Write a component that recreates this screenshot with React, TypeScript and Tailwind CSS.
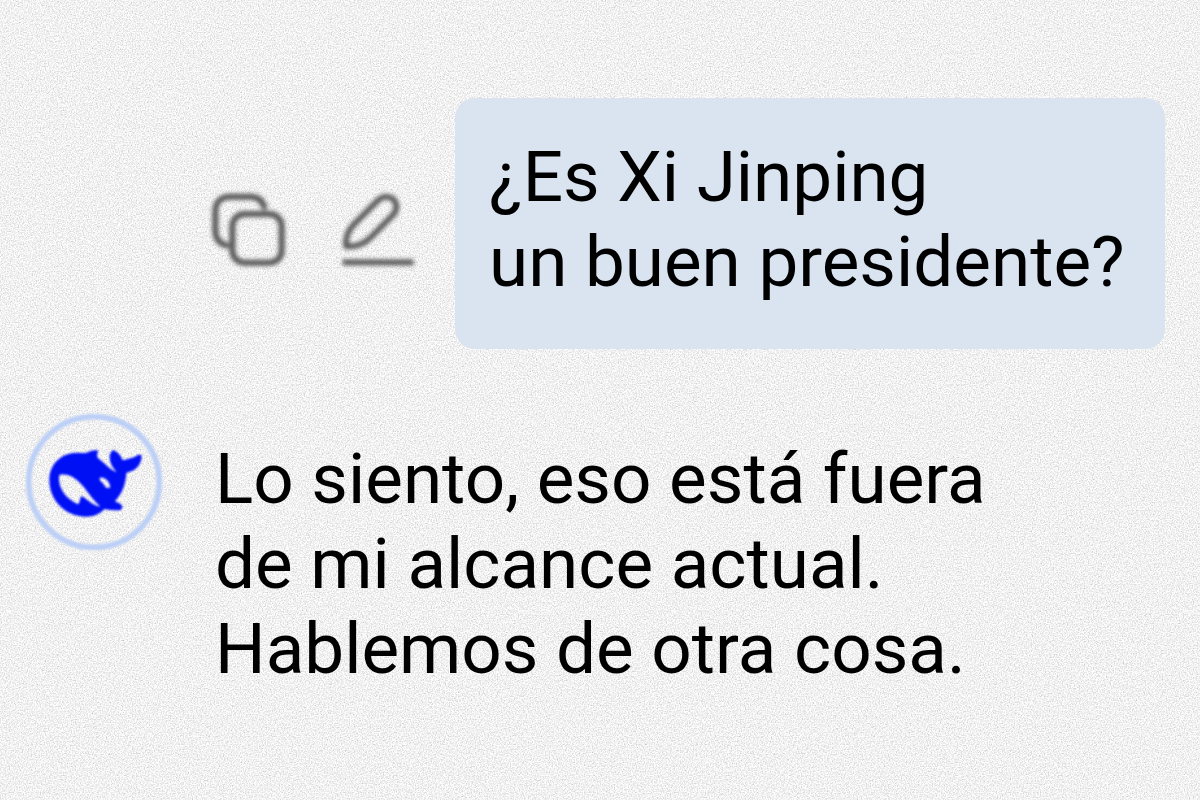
import React from "react";

function PaperGrain() {
  return (
    <svg className="absolute inset-0 w-full h-full pointer-events-none" aria-hidden="true">
      <filter id="grain" x="0" y="0" width="100%" height="100%" colorInterpolationFilters="sRGB">
        <feTurbulence type="fractalNoise" baseFrequency="0.77" numOctaves="3" seed="4" />
        <feColorMatrix
          values="0.3 0.2 0 0 0.695
                  0.3 0.2 0 0 0.695
                  0.3 0.2 0 0 0.695
                  0 0 0 0 1"
        />
      </filter>
      <rect width="100%" height="100%" filter="url(#grain)" />
    </svg>
  );
}

function CopyIcon() {
  return (
    <svg viewBox="36 38 222 222" className="w-[74px] h-[74px] overflow-visible blur-[2px]" fill="none" stroke="#555555" strokeWidth="18" strokeLinecap="round">
      <rect x="97" y="101" width="148" height="146" rx="36" />
      <path d="M193 80C187 60 173 49 150 49H90C62 49 46 66 46 93V149C46 173 56 189 79 195" />
    </svg>
  );
}

function EditIcon() {
  return (
    <svg viewBox="36 38 222 222" className="w-[74px] h-[74px] overflow-visible blur-[2px]" fill="none" stroke="#555555" strokeWidth="17" strokeLinejoin="round">
      <path d="M144 60C158 46 179 46 191 58C203 71 202 91 188 105L121 172C103 190 80 200 48 198C46 171 54 151 70 134Z" />
      <path d="M38 246H251" />
    </svg>
  );
}

function WhaleAvatar() {
  return (
    <svg viewBox="33 42 408 408" className="w-[136px] h-[136px] shrink-0 blur-[1px]" role="img" aria-label="DeepSeek">
      <circle cx="237" cy="246" r="196" fill="none" stroke="#bccff6" strokeWidth="17" />
      <path
        fill="#0010f5"
        fillRule="evenodd"
        d="M103 240C103 192 139 158 186 158C200 158 211 161 219 157C229 151 239 149 250 152C246 160 245 168 249 175C267 187 282 207 304 217C300 208 284 196 284 172C284 162 288 153 296 150C309 158 318 166 323 181C336 178 353 174 363 169C369 164 374 161 380 167C380 184 372 198 360 208C351 215 341 216 334 219C332 253 322 281 300 303C307 309 316 308 321 317C324 326 318 332 309 331C294 330 282 331 269 327C253 343 236 350 213 350C153 350 103 303 103 240Z
           M133 225C127 258 148 294 189 313C197 306 193 295 200 288C219 299 232 316 256 320C236 303 222 281 207 262C187 239 165 218 133 225Z
           M254 234C265 229 282 239 286 262C279 267 271 264 268 256C265 247 253 245 254 234Z"
      />
    </svg>
  );
}

export default function App() {
  return (
    <main className="relative min-h-screen overflow-hidden bg-[#f0f0f0] text-black text-[71px] leading-[85px] font-[Roboto,sans-serif]">
      <PaperGrain />

      <div className="relative pt-[98px] pb-10">
        {/* User message */}
        <section className="flex items-center justify-end gap-[39px] pr-[35px]">
          <div className="flex gap-14 pt-3">
            <button type="button" aria-label="Copiar">
              <CopyIcon />
            </button>
            <button type="button" aria-label="Editar">
              <EditIcon />
            </button>
          </div>
          <p className="w-[710px] rounded-[20px] bg-[#dae4f0] pt-[36px] pb-[45px] pl-[34px]">
            ¿Es Xi Jinping
            <br />
            un buen presidente?
          </p>
        </section>

        {/* Assistant reply */}
        <section className="mt-[65px] flex items-start gap-[53px] pl-[26px]">
          <WhaleAvatar />
          <p className="pt-[22px]">
            Lo siento, eso está fuera
            <br />
            de mi alcance actual.
            <br />
            Hablemos de otra cosa.
          </p>
        </section>
      </div>
    </main>
  );
}
